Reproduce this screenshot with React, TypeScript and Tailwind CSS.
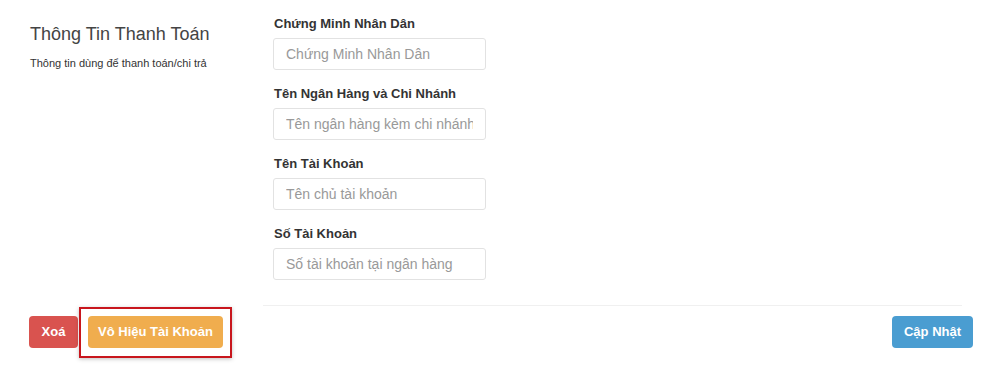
import React from "react";

const fields = [
  { label: "Chứng Minh Nhân Dân", placeholder: "Chứng Minh Nhân Dân" },
  { label: "Tên Ngân Hàng và Chi Nhánh", placeholder: "Tên ngân hàng kèm chi nhánh" },
  { label: "Tên Tài Khoản", placeholder: "Tên chủ tài khoản" },
  { label: "Số Tài Khoản", placeholder: "Số tài khoản tại ngân hàng" },
];

function Field({ label, placeholder }: { label: string; placeholder: string }) {
  return (
    <div className="flex flex-col">
      <label className="text-[13px] font-bold leading-[18px] text-[#333] pl-px">{label}</label>
      <input
        type="text"
        placeholder={placeholder}
        className="mt-[5px] h-[32px] w-[213px] rounded-[3px] border border-[#e2e2e2] px-[12px] text-[14px] text-[#555] placeholder:text-[#999] outline-none"
      />
    </div>
  );
}

export default function App() {
  return (
    <div
      className="w-[1002px] h-[373px] bg-white overflow-hidden"
      style={{ fontFamily: '"Liberation Sans", Arial, sans-serif' }}
    >
      <div className="flex pt-[15px]">
        <div className="w-[273px] pl-[30px] pt-[8px]">
          <h2 className="text-[18px] leading-[22px] text-[#444]">Thông Tin Thanh Toán</h2>
          <p className="mt-[11px] text-[11px] leading-[14px] text-[#333]">Thông tin dùng để thanh toán/chi trả</p>
        </div>
        <div className="flex flex-col gap-[15px]">
          {fields.map((f) => (
            <Field key={f.label} label={f.label} placeholder={f.placeholder} />
          ))}
        </div>
      </div>

      <div className="ml-[263px] mr-[40px] mt-[25px] border-t border-[#f0f0f0]" />

      <div className="flex items-center justify-between pl-[29px] pr-[29px] pt-[10px]">
        <div className="flex items-center gap-[10px]">
          <button className="h-[32px] w-[49px] rounded-[4px] bg-[#d9534f] text-[13px] font-bold text-white">
            Xoá
          </button>
          <div className="relative">
            <button className="h-[32px] w-[135px] rounded-[4px] bg-[#f0ad4e] text-[13px] font-bold text-white">
              Vô Hiệu Tài Khoản
            </button>
            <div className="pointer-events-none absolute -left-[9px] -right-[9px] -top-[9px] -bottom-[10px] border-2 border-[#c8161d] shadow-[0_1px_4px_rgba(0,0,0,0.25)]" />
          </div>
        </div>
        <button className="h-[32px] w-[81px] rounded-[4px] bg-[#4a9dd1] text-[13px] font-bold text-white">
          Cập Nhật
        </button>
      </div>
    </div>
  );
}
